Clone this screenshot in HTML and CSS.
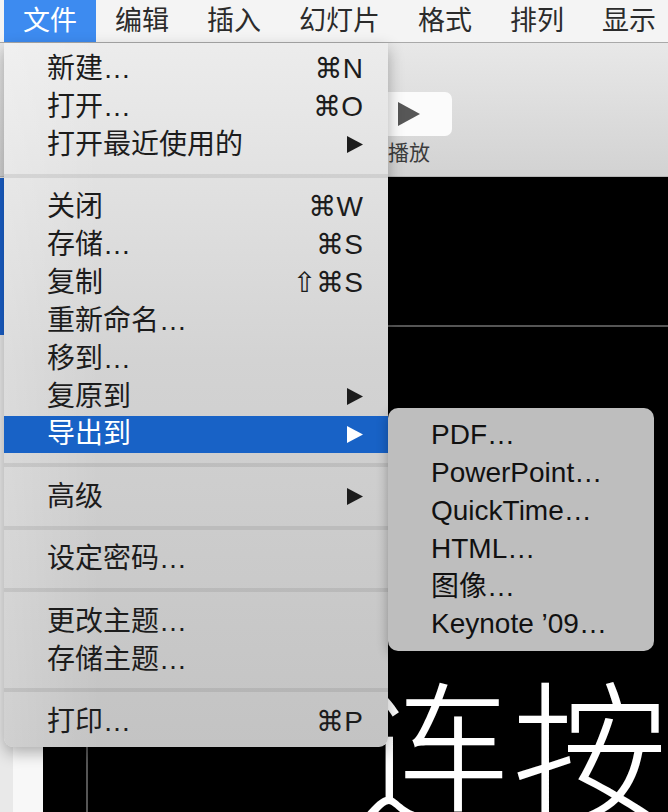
FILE: index.html
```html
<!DOCTYPE html>
<html lang="zh-CN">
<head>
    <meta charset="UTF-8">
    <meta name="viewport" content="width=device-width, initial-scale=1.0">
    <title>Keynote 文件菜单</title>
    <link rel="stylesheet" href="styles.css">
</head>
<body>
    <div class="menubar">
        <span class="menubar-item active">文件</span>
        <span class="menubar-item">编辑</span>
        <span class="menubar-item">插入</span>
        <span class="menubar-item">幻灯片</span>
        <span class="menubar-item">格式</span>
        <span class="menubar-item">排列</span>
        <span class="menubar-item">显示</span>
    </div>

    <div class="window">
        <div class="toolbar">
            <div class="tool">
                <div class="tool-key">
                    <svg width="22" height="24" viewBox="0 0 22 24"><polygon points="0,0 22,12 0,24" fill="#575757"/></svg>
                </div>
                <span class="tool-label">播放</span>
            </div>
        </div>

        <div class="workspace">
            <div class="sidebar">
                <div class="sidebar-rail">
                    <div class="thumb-selected"></div>
                </div>
                <div class="sidebar-list"></div>
            </div>
            <div class="canvas">
                <div class="slide">
                    <span class="slide-text">连按</span>
                </div>
            </div>
        </div>
    </div>

    <!-- 文件 menu -->
    <div class="menu">
        <div class="menu-item"><span>新建…</span><span class="shortcut">⌘N</span></div>
        <div class="menu-item"><span>打开…</span><span class="shortcut">⌘O</span></div>
        <div class="menu-item"><span>打开最近使用的</span><svg class="arrow" width="16" height="17" viewBox="0 0 16 17"><polygon points="0,0 16,8.5 0,17"/></svg></div>
        <div class="menu-sep"></div>
        <div class="menu-item"><span>关闭</span><span class="shortcut">⌘W</span></div>
        <div class="menu-item"><span>存储…</span><span class="shortcut">⌘S</span></div>
        <div class="menu-item"><span>复制</span><span class="shortcut">⇧⌘S</span></div>
        <div class="menu-item"><span>重新命名…</span></div>
        <div class="menu-item"><span>移到…</span></div>
        <div class="menu-item"><span>复原到</span><svg class="arrow" width="16" height="17" viewBox="0 0 16 17"><polygon points="0,0 16,8.5 0,17"/></svg></div>
        <div class="menu-item selected"><span>导出到</span><svg class="arrow" width="16" height="17" viewBox="0 0 16 17"><polygon points="0,0 16,8.5 0,17"/></svg></div>
        <div class="menu-sep"></div>
        <div class="menu-item"><span>高级</span><svg class="arrow" width="16" height="17" viewBox="0 0 16 17"><polygon points="0,0 16,8.5 0,17"/></svg></div>
        <div class="menu-sep"></div>
        <div class="menu-item"><span>设定密码…</span></div>
        <div class="menu-sep"></div>
        <div class="menu-item"><span>更改主题…</span></div>
        <div class="menu-item"><span>存储主题…</span></div>
        <div class="menu-sep"></div>
        <div class="menu-item"><span>打印…</span><span class="shortcut">⌘P</span></div>
    </div>

    <!-- 导出到 submenu -->
    <div class="submenu">
        <div class="menu-item">PDF…</div>
        <div class="menu-item">PowerPoint…</div>
        <div class="menu-item">QuickTime…</div>
        <div class="menu-item">HTML…</div>
        <div class="menu-item">图像…</div>
        <div class="menu-item">Keynote ’09…</div>
    </div>
</body>
</html>
```

FILE: styles.css
```css
* {
    box-sizing: border-box;
}

body {
    margin: 0;
    width: 668px;
    height: 812px;
    overflow: hidden;
    position: relative;
    background-color: #000;
    font-family: "Liberation Sans", "Noto Sans CJK SC", "DejaVu Sans", sans-serif;
}

/* menu bar */

.menubar {
    height: 43px;
    display: flex;
    padding-left: 4px;
    overflow: hidden;
    background-color: #f4f4f4;
    border-bottom: 1px solid #a9a9a9;
}

.menubar-item {
    flex-shrink: 0;
    padding: 0 19px;
    font-size: 27px;
    line-height: 42px;
    color: #2b2b2b;
    white-space: nowrap;
}

.menubar-item.active {
    background-color: #3d8bf0;
    color: #fff;
}

/* window behind the menu */

.window {
    display: flex;
    flex-direction: column;
    height: 769px;
}

.toolbar {
    flex-shrink: 0;
    height: 134px;
    padding: 49px 0 0 366px;
    background: linear-gradient(to bottom, #e8e8e8, #d2d2d2);
    border-bottom: 1px solid #b4b4b4;
}

.tool {
    width: 86px;
    display: flex;
    flex-direction: column;
    align-items: center;
}

.tool-key {
    width: 86px;
    height: 44px;
    background-color: #fbfbfb;
    border-radius: 7px;
    display: flex;
    align-items: center;
    justify-content: center;
}

.tool-label {
    margin-top: 4px;
    font-family: "Noto Sans CJK SC", sans-serif;
    font-size: 21px;
    line-height: 22px;
    color: #3c3c3c;
}

.workspace {
    flex: 1;
    min-height: 0;
    display: flex;
    overflow: hidden;
}

.sidebar {
    width: 45px;
    display: flex;
}

.sidebar-rail {
    width: 13px;
    background-color: #e9e9e9;
}

.thumb-selected {
    height: 157px;
    margin-top: 1px;
    background-color: #1a5fc8;
}

.sidebar-list {
    flex: 1;
    background-color: #f8f8f8;
}

.canvas {
    flex: 1;
    display: flex;
    align-items: flex-start;
    background-color: #000;
}

.slide {
    flex: 1;
    margin: 148px 0 0 43px;
    padding: 340px 0 0 268px;
    border-top: 2px solid #555;
    border-left: 2px solid #555;
}

.slide-text {
    display: block;
    font-family: "Noto Sans CJK SC", sans-serif;
    font-weight: 300;
    font-size: 156px;
    line-height: 1;
    color: #fff;
    white-space: nowrap;
}

/* menus */

.menu {
    position: absolute;
    left: 4px;
    top: 43px;
    width: 384px;
    padding: 7px 0 6px;
    background:
        linear-gradient(to right, rgba(255, 255, 255, 0.22), rgba(255, 255, 255, 0) 25%),
        linear-gradient(to bottom, #ececec, #d3d3d3 45%, #c3c3c3);
    border-radius: 0 0 9px 9px;
    box-shadow: 0 6px 16px rgba(0, 0, 0, 0.3);
}

.menu-item {
    height: 37.9px;
    display: flex;
    align-items: center;
    justify-content: space-between;
    padding: 0 25px 0 43px;
    font-size: 28px;
    line-height: 34px;
    color: #1c1c1c;
    white-space: nowrap;
}

.menu-item.selected {
    background-color: #1862c6;
    color: #fff;
}

.shortcut {
    font-family: "Liberation Sans", "DejaVu Sans", sans-serif;
}

.arrow {
    fill: currentColor;
}

.menu-sep {
    height: 4px;
    margin: 10px 0 10.5px;
    background-color: rgba(0, 0, 0, 0.08);
}

.submenu {
    position: absolute;
    left: 388px;
    top: 408px;
    width: 266px;
    padding: 8px 0;
    background-color: #bebebe;
    border-radius: 10px;
    box-shadow: 0 4px 12px rgba(0, 0, 0, 0.3);
}

.submenu .menu-item {
    color: #111;
}
```
